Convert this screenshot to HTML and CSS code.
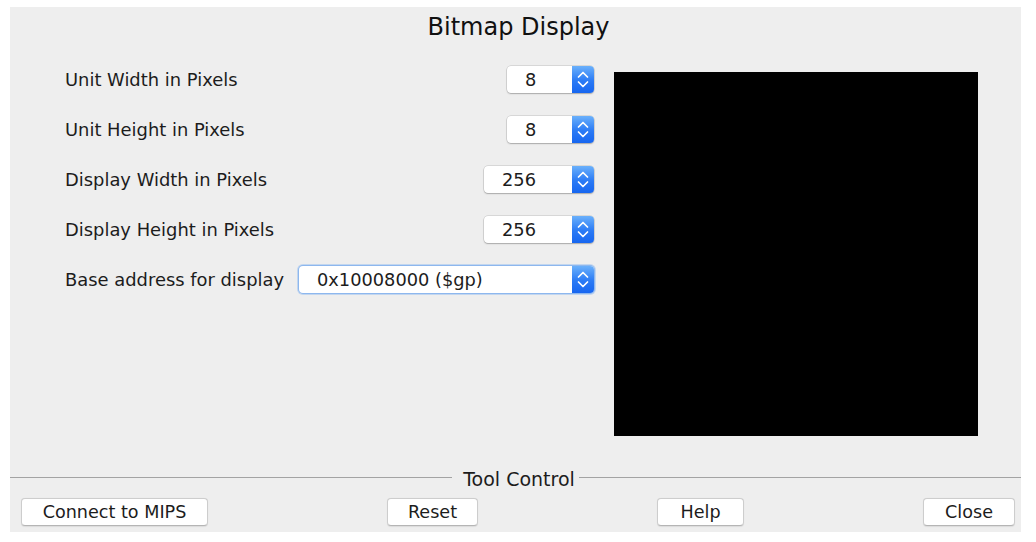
FILE: index.html
```html
<!DOCTYPE html>
<html>
<head>
<meta charset="utf-8">
<title>Bitmap Display</title>
<link rel="stylesheet" href="styles.css">
</head>
<body>
<div class="window">
  <h1 class="title">Bitmap Display</h1>
  <div class="main">
    <div class="form">
      <div class="row">
        <span class="label">Unit Width in Pixels</span>
        <div class="spin w-small"><span class="field">8</span><span class="stepper"><svg viewBox="0 0 22 27" width="22" height="27"><polyline points="6.5,11 11,6.5 15.5,11"/><polyline points="6.5,16 11,20.5 15.5,16"/></svg></span></div>
      </div>
      <div class="row">
        <span class="label">Unit Height in Pixels</span>
        <div class="spin w-small"><span class="field">8</span><span class="stepper"><svg viewBox="0 0 22 27" width="22" height="27"><polyline points="6.5,11 11,6.5 15.5,11"/><polyline points="6.5,16 11,20.5 15.5,16"/></svg></span></div>
      </div>
      <div class="row">
        <span class="label">Display Width in Pixels</span>
        <div class="spin w-mid"><span class="field">256</span><span class="stepper"><svg viewBox="0 0 22 27" width="22" height="27"><polyline points="6.5,11 11,6.5 15.5,11"/><polyline points="6.5,16 11,20.5 15.5,16"/></svg></span></div>
      </div>
      <div class="row">
        <span class="label">Display Height in Pixels</span>
        <div class="spin w-mid"><span class="field">256</span><span class="stepper"><svg viewBox="0 0 22 27" width="22" height="27"><polyline points="6.5,11 11,6.5 15.5,11"/><polyline points="6.5,16 11,20.5 15.5,16"/></svg></span></div>
      </div>
      <div class="row">
        <span class="label">Base address for display</span>
        <div class="spin w-wide focus"><span class="field">0x10008000 ($gp)</span><span class="stepper"><svg viewBox="0 0 22 27" width="22" height="27"><polyline points="6.5,11 11,6.5 15.5,11"/><polyline points="6.5,16 11,20.5 15.5,16"/></svg></span></div>
      </div>
    </div>
    <div class="canvas"></div>
  </div>
  <div class="legend"><span class="legend-text">Tool Control</span></div>
  <div class="buttons">
    <button class="btn w-connect">Connect to MIPS</button>
    <button class="btn w-reset">Reset</button>
    <button class="btn w-help">Help</button>
    <button class="btn w-close">Close</button>
  </div>
</div>
</body>
</html>
```
FILE: styles.css
```css
html, body {
  margin: 0;
  padding: 0;
  background: #ffffff;
}
body {
  width: 1036px;
  height: 542px;
  overflow: hidden;
  font-family: "DejaVu Sans", "Liberation Sans", sans-serif;
  color: #1c1c1c;
}
.window {
  margin: 7px 0 0 10px;
  width: 1011px;
  height: 525px;
  padding-bottom: 6px;
  box-sizing: border-box;
  background: #eeeeee;
  display: flex;
  flex-direction: column;
}
.title {
  margin: 0;
  padding-left: 6px;
  height: 40px;
  line-height: 40px;
  font-size: 24px;
  font-weight: normal;
  text-align: center;
  color: #111;
}
.main {
  flex: 1;
  display: flex;
  padding-left: 55px;
  gap: 20px;
}
.form {
  width: 529px;
  padding-top: 18px;
  display: flex;
  flex-direction: column;
  gap: 22px;
}
.row {
  height: 28px;
  display: flex;
  align-items: center;
  justify-content: space-between;
}
.label {
  font-size: 17.9px;
  white-space: nowrap;
}
.spin {
  height: 27px;
  display: flex;
  background: #ffffff;
  border-radius: 4px;
  box-shadow: 0 0 0 0.5px rgba(0,0,0,0.18), 0 1px 1.5px rgba(0,0,0,0.22);
  box-sizing: border-box;
  overflow: hidden;
}
.w-small { width: 87px; }
.w-mid { width: 110px; }
.w-wide { width: 295px; }
.spin.focus {
  box-shadow: 0 0 0 1px #8db7ee, 0 0 0 2px rgba(140,185,240,0.45);
}
.field {
  flex: 1;
  padding-left: 18px;
  font-size: 17.8px;
  line-height: 27px;
  white-space: nowrap;
}
.stepper {
  width: 22px;
  height: 27px;
  background: linear-gradient(#6ab0fb, #2a7af5 55%, #1766f0);
  display: flex;
}
.stepper svg {
  display: block;
  fill: none;
  stroke: #ffffff;
  stroke-width: 1.7;
  stroke-linecap: round;
  stroke-linejoin: round;
}
.canvas {
  margin-top: 25px;
  width: 364px;
  height: 364px;
  background: #000000;
}
.legend {
  height: 20px;
  display: flex;
  align-items: center;
  gap: 4px;
}
.legend::before,
.legend::after {
  content: "";
  flex: 1;
  height: 1px;
  background: #a3a3a3;
}
.legend-text {
  margin-left: 7px;
  font-size: 19px;
  line-height: 20px;
  position: relative;
  top: 2px;
}
.buttons {
  margin-top: 11px;
  padding: 0 6px 0 11px;
  display: flex;
  justify-content: space-between;
}
.btn {
  height: 28px;
  margin: 0;
  padding: 0;
  background: #ffffff;
  border: 1px solid #cdcdcd;
  border-bottom-color: #b5b5b5;
  border-radius: 4px;
  font-family: "DejaVu Sans", "Liberation Sans", sans-serif;
  font-size: 17.6px;
  color: #1c1c1c;
  box-shadow: 0 0.5px 1px rgba(0,0,0,0.08);
}
.w-connect { width: 187px; }
.w-reset { width: 91px; }
.w-help { width: 87px; }
.w-close { width: 92px; }
```
